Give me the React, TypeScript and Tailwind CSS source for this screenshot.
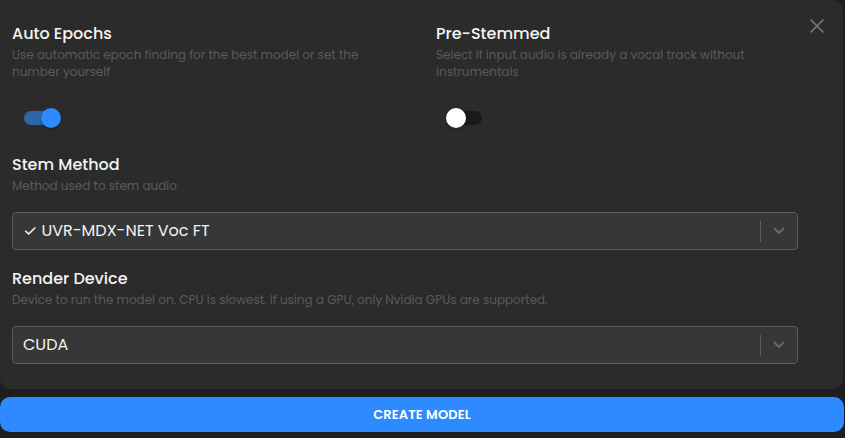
import { useState } from 'react';

const font = { fontFamily: 'Poppins, Inter, "Noto Sans", sans-serif' };

const Toggle = ({ on, onChange }: { on: boolean; onChange: () => void }) => (
  <button
    onClick={onChange}
    className="relative block w-[40px] h-[20px] ml-[10px]"
    aria-pressed={on}
  >
    <span
      className={`absolute left-[2px] top-[3px] w-[34px] h-[14px] rounded-full ${on ? 'bg-[#2f64aa]' : 'bg-[#1b1b1b]'}`}
    />
    <span
      className={`absolute top-0 w-[20px] h-[20px] rounded-full shadow-[0_1px_2px_rgba(0,0,0,0.4)] ${on ? 'left-[19px] bg-[#2d8aff]' : 'left-0 bg-white'}`}
    />
  </button>
);

const Field = ({ title, desc, children, className = '' }: { title: string; desc: string; children: React.ReactNode; className?: string }) => (
  <div className={className}>
    <div className="text-[16px] leading-6 font-medium text-[#f4f4f4]">{title}</div>
    <div className="text-[12px] leading-[17px] text-[#5a5a5a] max-w-[352px]">{desc}</div>
    {children}
  </div>
);

const Select = ({ value }: { value: string }) => (
  <div className="mt-[18px] h-[38px] w-[786px] flex items-center rounded-[4px] border border-[#5a5a5a] bg-[#373737]">
    <div className="flex-1 pl-[10px] text-[16px] font-normal text-[#f2f2f2]">{value}</div>
    <div className="w-px h-[21px] bg-[#5e5e5e]" />
    <div className="w-[36px] flex items-center justify-center">
      <svg width="12" height="8" viewBox="0 0 12 8" fill="none">
        <path d="M1.5 1.5 6 6l4.5-4.5" stroke="#686868" strokeWidth="2" strokeLinecap="round" strokeLinejoin="round" />
      </svg>
    </div>
  </div>
);

export default function App() {
  const [autoEpochs, setAutoEpochs] = useState(true);
  const [preStemmed, setPreStemmed] = useState(false);

  return (
    <div className="w-[845px] h-[438px] bg-[#1e1e1e] overflow-hidden" style={font}>
      <div className="relative mr-[2px] bg-[#2b2b2b] rounded-tr-[10px] rounded-b-[10px] pt-[22px] px-[12px] pb-[25px]">
        <button className="absolute top-[18px] right-[18px] w-[16px] h-[16px] flex items-center justify-center">
          <svg width="16" height="16" viewBox="0 0 16 16" fill="none">
            <path d="M1.5 1.5l13 13M14.5 1.5l-13 13" stroke="#777777" strokeWidth="1.6" />
          </svg>
        </button>

        <div className="grid grid-cols-[424px_1fr]">
          <Field title="Auto Epochs" desc="Use automatic epoch finding for the best model or set the number yourself">
            <div className="mt-[28px]">
              <Toggle on={autoEpochs} onChange={() => setAutoEpochs(!autoEpochs)} />
            </div>
          </Field>
          <Field title="Pre-Stemmed" desc="Select if input audio is already a vocal track without instrumentals">
            <div className="mt-[28px]">
              <Toggle on={preStemmed} onChange={() => setPreStemmed(!preStemmed)} />
            </div>
          </Field>
        </div>

        <Field title="Stem Method" desc="Method used to stem audio" className="mt-[25px]">
          <Select value="✓ UVR-MDX-NET Voc FT" />
        </Field>

        <Field
          title="Render Device"
          desc="Device to run the model on. CPU is slowest. If using a GPU, only Nvidia GPUs are supported."
          className="mt-[17px] [&>div:nth-child(2)]:max-w-none"
        >
          <Select value="CUDA" />
        </Field>
      </div>

      <button className="mt-[8px] mr-[1px] w-[844px] h-[35px] rounded-[10px] bg-[#2d8aff] text-white text-[13px] font-semibold uppercase tracking-[0.01em]">
        Create Model
      </button>
    </div>
  );
}
